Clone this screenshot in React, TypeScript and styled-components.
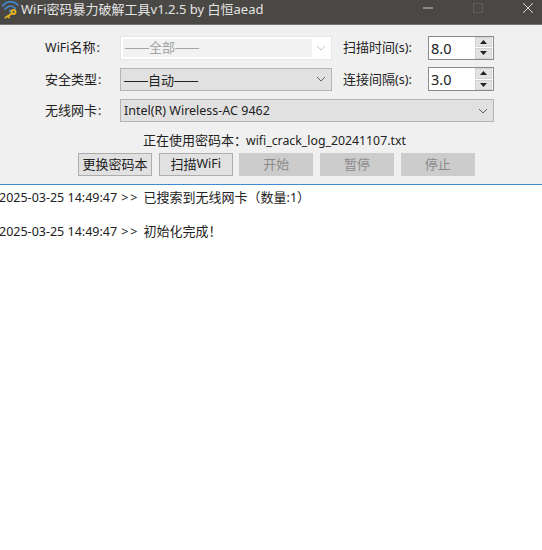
import React from "react";
import styled, { createGlobalStyle } from "styled-components";

const Global = createGlobalStyle`
  html, body { margin: 0; padding: 0; background: #fff; }
  body { font-family: "Noto Sans", "Noto Sans CJK SC", sans-serif; font-size: 12.5px; color: #222; overflow: hidden; }
  * { box-sizing: border-box; }
`;

const Page = styled.div`
  width: 542px;
  height: 550px;
  display: flex;
  flex-direction: column;
  overflow: hidden;
`;

const TitleBar = styled.div`
  height: 25px;
  flex: none;
  background: #4a4845;
  border-bottom: 1px solid #77756f;
  display: flex;
  align-items: center;
  color: #e4e4e4;
  font-size: 13px;
`;

const TitleIcon = styled.svg`
  width: 19px;
  height: 18px;
  margin-left: 1px;
  margin-top: -4px;
  flex: none;
`;

const TitleText = styled.span`
  margin-left: 1px;
  margin-top: -8px;
  white-space: nowrap;
  flex: 1;
`;

const WinControls = styled.div`
  display: flex;
  align-items: center;
  margin-top: -8px;
`;

const WinGlyph = styled.svg`
  width: 14px;
  height: 14px;
  margin-left: 36px;
  display: block;
`;

const WinClose = styled(WinGlyph)`
  margin-right: 7px;
`;

const Panel = styled.div`
  height: 160px;
  flex: none;
  background: #f0f0f0;
  border-bottom: 1px solid #3d8bd0;
  display: flex;
  flex-direction: column;
  padding: 11px 0 0 45px;
`;

const Row = styled.div`
  display: flex;
  align-items: center;
  height: 23px;
  margin-bottom: 8.5px;
`;

const Zh = styled.span`
  font-size: 13px;
`;

const Dash = styled.span`
  font-family: "Liberation Sans", sans-serif;
  font-size: 12px;
`;

const Colon = styled.span`
  margin-left: 1px;
`;

const Label = styled.span`
  width: 75px;
  flex: none;
  white-space: nowrap;
  padding-bottom: 2px;
`;

const Combo = styled.div<{ $w: number }>`
  width: ${(p) => p.$w}px;
  height: 23px;
  flex: none;
  display: flex;
  align-items: center;
  justify-content: space-between;
  padding: 0 5px 0 3px;
  border: 1px solid #b4b4b4;
  background: #e1e1e1;
  color: #222;
  white-space: nowrap;
`;

const DisabledCombo = styled.div<{ $w: number }>`
  width: ${(p) => p.$w}px;
  height: 24px;
  flex: none;
  display: flex;
  align-items: center;
  padding-right: 5px;
  border: 1px solid #e6e6e6;
  background: #fff;
  color: #a4a4a4;
  white-space: nowrap;
`;

const DisabledField = styled.div`
  flex: 1;
  height: 18px;
  margin: 0 4px 0 2px;
  padding-left: 2px;
  line-height: 17px;
  background: #f2f2f2;
`;

const Chevron = styled.svg<{ $disabled?: boolean }>`
  width: 10px;
  height: 6px;
  flex: none;
  fill: none;
  stroke: ${(p) => (p.$disabled ? "#c4c4c4" : "#606060")};
  stroke-width: 1;
`;

const SpinLabel = styled.span`
  width: 85px;
  flex: none;
  margin-left: 11px;
  white-space: nowrap;
  padding-bottom: 2px;
`;

const Spin = styled.div`
  width: 66px;
  height: 24px;
  flex: none;
  display: flex;
  align-items: center;
  justify-content: space-between;
  background: #fff;
  border: 1px solid #8a8a8a;
  padding-left: 2px;
  font-size: 14.5px;
`;

const SpinButtons = styled.div`
  width: 17px;
  height: 22px;
  display: flex;
  flex-direction: column;
  gap: 1px;
  margin-right: 1px;
  flex: none;
`;

const SpinButton = styled.div`
  flex: 1;
  background: #e3e3e3;
  border: 1px solid #d2d2d2;
  display: flex;
  align-items: center;
  justify-content: center;
`;

const Arrow = styled.svg`
  width: 7px;
  height: 4px;
  fill: #222;
`;

const FileLine = styled.div`
  line-height: 16px;
  margin-top: 1px;
  margin-left: 98px;
  white-space: nowrap;
`;

const FileName = styled.span`
  font-size: 12.3px;
  margin-left: -1px;
`;

const Buttons = styled.div`
  display: flex;
  gap: 6.7px;
  margin-top: 4px;
  margin-left: 33px;
`;

const Button = styled.div<{ $disabled?: boolean }>`
  width: 74px;
  height: 23px;
  flex: none;
  display: flex;
  align-items: center;
  justify-content: center;
  white-space: nowrap;
  padding-bottom: 1px;
  border: 1px solid ${(p) => (p.$disabled ? "#cccccc" : "#adadad")};
  background: ${(p) => (p.$disabled ? "#cccccc" : "#e1e1e1")};
  color: ${(p) => (p.$disabled ? "#8a8a8a" : "#222")};
`;

const Log = styled.div`
  flex: 1;
  background: #fff;
  padding-top: 4px;
  margin-left: -1px;
`;

const LogLine = styled.div`
  height: 34px;
  line-height: 17px;
  white-space: nowrap;
`;

const Prompt = styled.span`
  letter-spacing: 1.8px;
  margin: 0 1px 0 1px;
`;

const Down = () => (
  <Arrow viewBox="0 0 7 4"><path d="M0 0h7L3.5 4z" /></Arrow>
);
const Up = () => (
  <Arrow viewBox="0 0 7 4"><path d="M0 4h7L3.5 0z" /></Arrow>
);
const Chev = ({ disabled }: { disabled?: boolean }) => (
  <Chevron $disabled={disabled} viewBox="0 0 10 6"><path d="M1 1l4 4 4-4" /></Chevron>
);
const SpinBox = ({ value }: { value: string }) => (
  <Spin>
    {value}
    <SpinButtons>
      <SpinButton><Up /></SpinButton>
      <SpinButton><Down /></SpinButton>
    </SpinButtons>
  </Spin>
);

export default function App() {
  return (
    <Page>
      <Global />
      <TitleBar>
        <TitleIcon viewBox="0 0 19 18">
          <g fill="none" stroke="#3f8fd8" strokeWidth="1.6" strokeLinecap="round">
            <path d="M1.5 5C6 -0.5 12 -0.5 17 4" />
            <path d="M4 8C7.5 4 11 4 14.5 7.5" />
          </g>
          <circle cx="9.5" cy="10" r="1.5" fill="#3f8fd8" />
          <g fill="none" stroke="#e0b21f" strokeWidth="2" strokeLinecap="round">
            <circle cx="12.5" cy="11" r="2" />
            <path d="M11 12.5L4.5 16.5M7 15l1 1.5" />
          </g>
        </TitleIcon>
        <TitleText>WiFi密码暴力破解工具v1.2.5 by 白恒aead</TitleText>
        <WinControls>
          <WinGlyph viewBox="0 0 14 14"><path d="M2 7h10" stroke="#b4b4b2" strokeWidth="1.2" /></WinGlyph>
          <WinGlyph viewBox="0 0 14 14"><rect x="2.5" y="2.5" width="9" height="9" fill="none" stroke="#62605d" /></WinGlyph>
          <WinClose viewBox="0 0 14 14"><path d="M2 2l10 10M12 2L2 12" stroke="#d8d8d8" strokeWidth="1" /></WinClose>
        </WinControls>
      </TitleBar>
      <Panel>
        <Row>
          <Label>WiFi<Zh>名称</Zh><Colon>:</Colon></Label>
          <DisabledCombo $w={212}>
            <DisabledField><Dash>——</Dash><Zh>全部</Zh><Dash>——</Dash></DisabledField>
            <Chev disabled />
          </DisabledCombo>
          <SpinLabel><Zh>扫描时间</Zh>(s):</SpinLabel>
          <SpinBox value="8.0" />
        </Row>
        <Row>
          <Label><Zh>安全类型</Zh><Colon>:</Colon></Label>
          <Combo $w={212}><span><Dash>——</Dash><Zh>自动</Zh><Dash>——</Dash></span><Chev /></Combo>
          <SpinLabel><Zh>连接间隔</Zh>(s):</SpinLabel>
          <SpinBox value="3.0" />
        </Row>
        <Row>
          <Label><Zh>无线网卡</Zh><Colon>:</Colon></Label>
          <Combo $w={374}>Intel(R) Wireless-AC 9462<Chev /></Combo>
        </Row>
        <FileLine><Zh>正在使用密码本：</Zh><FileName>wifi_crack_log_20241107.txt</FileName></FileLine>
        <Buttons>
          <Button><Zh>更换密码本</Zh></Button>
          <Button><Zh>扫描</Zh>WiFi</Button>
          <Button $disabled><Zh>开始</Zh></Button>
          <Button $disabled><Zh>暂停</Zh></Button>
          <Button $disabled><Zh>停止</Zh></Button>
        </Buttons>
      </Panel>
      <Log>
        <LogLine>2025-03-25 14:49:47 <Prompt>&gt;&gt;</Prompt> <Zh>已搜索到无线网卡（数量</Zh>:1<Zh>）</Zh></LogLine>
        <LogLine>2025-03-25 14:49:47 <Prompt>&gt;&gt;</Prompt> <Zh>初始化完成！</Zh></LogLine>
      </Log>
    </Page>
  );
}
